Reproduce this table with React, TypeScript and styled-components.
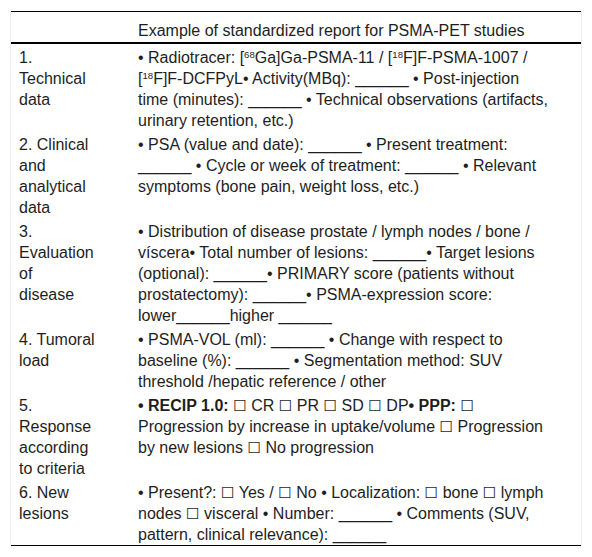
import React from "react";
import styled, { createGlobalStyle } from "styled-components";

const Global = createGlobalStyle`
  html, body { margin: 0; padding: 0; background: #ffffff; }
  body { font-family: "Liberation Sans", Arial, sans-serif; color: #1e1e1e; }
`;

const Page = styled.div`
  padding: 11px 0 0 10px;
`;

const Frame = styled.div`
  width: 570px;
  border-left: 1px solid #ececec;
  border-right: 1px solid #ececec;
`;

const Table = styled.table`
  width: 570px;
  border-collapse: collapse;
  border-top: 1px solid #000;
  border-bottom: 1px solid #000;
  font-size: 16px;
  line-height: 21px;
  table-layout: fixed;
`;

const HeadRow = styled.tr`
  border-bottom: 2px solid #000;
`;

const HeadCell = styled.th<{ $w?: number }>`
  text-align: left;
  font-weight: normal;
  padding: 8px 8px 1px 8px;
  vertical-align: bottom;
  white-space: nowrap;
  ${(p) => (p.$w ? `width: ${p.$w}px;` : "")}
`;

const LabelCell = styled.td`
  width: 103px;
  padding: 3px 8px 0 8px;
  vertical-align: top;
  white-space: nowrap;
`;

const BodyCell = styled.td`
  padding: 3px 8px 0 8px;
  vertical-align: top;
  white-space: nowrap;
`;

const Sup = styled.sup`
  font-size: 0.6em;
  line-height: 0;
  vertical-align: 0.5em;
`;

const Box = styled.span`
  font-family: "DejaVu Sans", sans-serif;
  font-size: 0.95em;
  line-height: 0;
`;

const Bold = styled.b`
  font-weight: bold;
`;

const B = () => <Box>☐</Box>;
const U = "______";

type Row = { label: string[]; lines: React.ReactNode[] };

const rows: Row[] = [
  {
    label: ["1.", "Technical", "data"],
    lines: [
      <>• Radiotracer: [<Sup>68</Sup>Ga]Ga-PSMA-11 / [<Sup>18</Sup>F]F-PSMA-1007 /</>,
      <>[<Sup>18</Sup>F]F-DCFPyL• Activity(MBq): {U} • Post-injection</>,
      <>time (minutes): {U} • Technical observations (artifacts,</>,
      <>urinary retention, etc.)</>,
    ],
  },
  {
    label: ["2. Clinical", "and", "analytical", "data"],
    lines: [
      <>• PSA (value and date): {U} • Present treatment:</>,
      <>{U} • Cycle or week of treatment: {U} • Relevant</>,
      <>symptoms (bone pain, weight loss, etc.)</>,
    ],
  },
  {
    label: ["3.", "Evaluation", "of", "disease"],
    lines: [
      <>• Distribution of disease prostate / lymph nodes / bone /</>,
      <>víscera• Total number of lesions: {U}• Target lesions</>,
      <>(optional): {U}• PRIMARY score (patients without</>,
      <>prostatectomy): {U}• PSMA-expression score:</>,
      <>lower{U}higher {U}</>,
    ],
  },
  {
    label: ["4. Tumoral", "load"],
    lines: [
      <>• PSMA-VOL (ml): {U} • Change with respect to</>,
      <>baseline (%): {U} • Segmentation method: SUV</>,
      <>threshold /hepatic reference / other</>,
    ],
  },
  {
    label: ["5.", "Response", "according", "to criteria"],
    lines: [
      <><Bold>• RECIP 1.0:</Bold> <B /> CR <B /> PR <B /> SD <B /> DP<Bold>• PPP:</Bold> <B /></>,
      <>Progression by increase in uptake/volume <B /> Progression</>,
      <>by new lesions <B /> No progression</>,
    ],
  },
  {
    label: ["6. New", "lesions"],
    lines: [
      <>• Present?: <B /> Yes / <B /> No • Localization: <B /> bone <B /> lymph</>,
      <>nodes <B /> visceral • Number: {U} • Comments (SUV,</>,
      <>pattern, clinical relevance): {U}</>,
    ],
  },
];

const Lines: React.FC<{ items: React.ReactNode[] }> = ({ items }) => (
  <>
    {items.map((item, i) => (
      <React.Fragment key={i}>
        {i > 0 && <br />}
        {item}
      </React.Fragment>
    ))}
  </>
);

export default function App() {
  return (
    <Page>
      <Global />
      <Frame>
        <Table>
          <thead>
            <HeadRow>
              <HeadCell $w={103} />
              <HeadCell>Example of standardized report for PSMA-PET studies</HeadCell>
            </HeadRow>
          </thead>
          <tbody>
            {rows.map((r, i) => (
              <tr key={i}>
                <LabelCell>
                  <Lines items={r.label} />
                </LabelCell>
                <BodyCell>
                  <Lines items={r.lines} />
                </BodyCell>
              </tr>
            ))}
          </tbody>
        </Table>
      </Frame>
    </Page>
  );
}
